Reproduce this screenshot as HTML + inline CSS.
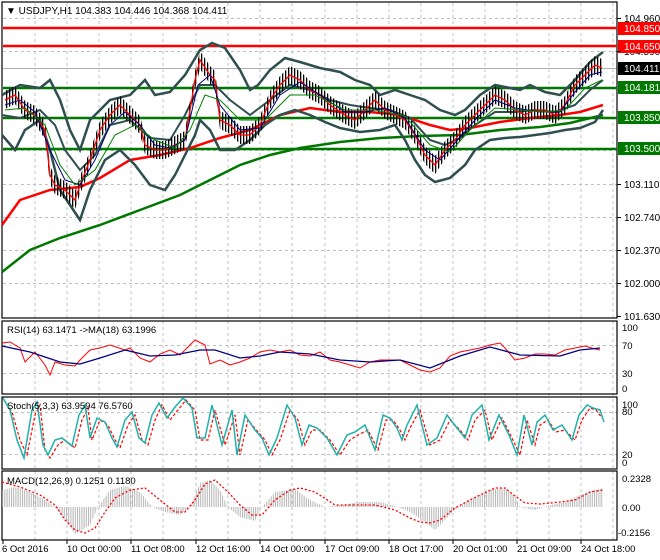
<!DOCTYPE html>
<html><head><meta charset="utf-8"><style>
html,body{margin:0;padding:0;background:#fff;}
svg{display:block;font-family:"Liberation Sans",sans-serif;font-size:10px;}
</style></head><body>
<svg width="660" height="560" viewBox="0 0 660 560" xmlns="http://www.w3.org/2000/svg">
<defs>
<pattern id="hist" width="2.2" height="10" patternUnits="userSpaceOnUse"><rect x="0" y="0" width="1" height="10" fill="#b4b4b4"/></pattern>
<pattern id="bars" width="3" height="10" patternUnits="userSpaceOnUse"><rect x="0" y="0" width="1.3" height="10" fill="#000"/></pattern>
</defs>
<rect width="660" height="560" fill="#fff"/>
<g stroke="#c0c0c0" stroke-dasharray="3 3" stroke-width="1">
<path d="M35 3V540M67 3V540M99 3V540M131 3V540M163 3V540M196 3V540M228 3V540M260 3V540M292 3V540M325 3V540M357 3V540M389 3V540M421 3V540M453 3V540M485 3V540M517 3V540M549 3V540M581 3V540M613 3V540"/>
<path d="M3 18.5H617M3 51.5H617M3 117.5H617M3 150.5H617M3 184.5H617M3 217.5H617M3 250.5H617M3 283.5H617"/>
<path d="M3 345.5H617M3 373.5H617M3 412.5H617M3 454.5H617"/>
</g>
<path d="M3 68.5H617" stroke="#b0b0b0"/>
<g fill="none" stroke="#000" stroke-width="1.2">
<rect x="2" y="2" width="615" height="316"/>
<rect x="2" y="321" width="615" height="73"/>
<rect x="2" y="397" width="615" height="72"/>
<rect x="2" y="471" width="615" height="69"/>
</g>
<g stroke-width="2.5">
<path d="M3 28H617M3 46H617" stroke="#ff0000"/>
<path d="M3 88H617M3 118H617M3 149H617" stroke="#007800"/>
</g>
<polyline fill="none" stroke="#007800" stroke-width="2.5" points="2,272 30,250 60,238 100,225 140,210 180,195 210,180 240,165 270,155 300,148 340,142 380,138 420,136 460,135 500,130 540,127 570,123 603,115"/>
<polyline fill="none" stroke="#ff0000" stroke-width="2.5" points="2,225 20,200 50,190 80,187 100,178 130,160 160,155 190,148 220,138 250,130 280,115 310,108 340,112 370,112 400,115 430,125 450,130 470,128 500,122 530,118 560,115 580,112 603,105"/>
<g fill="none" stroke="#2f4f4f" stroke-width="2.5">
<polyline points="2,95 20,85 40,88 50,80 60,100 70,130 80,150 90,120 110,100 130,95 145,80 155,95 170,92 185,75 200,50 212,43 225,48 240,70 250,90 258,85 270,70 285,58 300,62 320,68 340,72 355,80 370,85 380,95 395,90 410,95 425,100 440,110 455,115 465,110 480,95 495,85 510,88 520,90 530,85 545,92 560,95 575,80 590,62 603,52"/>
<polyline points="2,135 15,150 25,130 40,120 50,150 60,190 70,205 80,220 90,190 105,160 120,150 135,165 150,185 165,190 175,175 185,155 195,135 200,120 210,130 220,150 235,150 250,140 265,125 280,115 295,110 310,115 325,122 340,128 360,132 380,130 395,125 405,140 415,160 425,175 435,182 450,178 465,165 475,150 490,140 505,138 520,137 535,135 550,133 565,130 580,128 595,122 603,110"/>
<polyline stroke-width="2" points="2,115 20,118 40,110 55,125 65,150 80,170 95,155 110,125 130,120 150,138 170,140 185,115 200,85 215,85 230,100 250,115 270,100 290,85 310,90 330,100 350,105 370,108 390,110 410,118 430,140 445,145 460,138 475,125 495,112 515,112 535,110 555,112 575,105 590,90 603,80"/>
</g>
<polygon fill="url(#bars)" points="5,91 15,86 25,101 35,106 45,121 50,166 55,176 65,181 75,191 80,176 90,151 100,121 110,106 120,96 130,106 140,116 145,136 155,141 165,141 175,136 185,131 195,71 200,51 210,66 215,71 220,111 230,116 240,126 250,126 260,116 270,91 280,76 290,66 300,71 310,81 320,86 330,96 345,106 355,111 365,101 375,91 385,101 395,106 405,111 415,126 425,146 435,156 445,141 455,131 465,116 475,106 485,96 495,86 505,91 515,101 525,106 535,101 545,101 555,106 565,96 575,76 585,66 595,56 602,59 602,77 595,74 585,84 575,94 565,114 555,124 545,119 535,119 525,124 515,119 505,109 495,104 485,114 475,124 465,134 455,149 445,159 435,174 425,164 415,144 405,129 395,124 385,119 375,109 365,119 355,129 345,124 330,114 320,104 310,99 300,89 290,84 280,94 270,109 260,134 250,144 240,144 230,134 220,129 215,89 210,84 200,69 195,89 185,149 175,154 165,159 155,159 145,154 140,134 130,124 120,114 110,124 100,139 90,169 80,194 75,209 65,199 55,194 50,184 45,139 35,124 25,119 15,104 5,109"/>
<polyline fill="none" stroke="#ff0000" stroke-width="1.3" points="5,100 15,95 25,110 35,115 45,130 50,175 55,185 65,190 75,200 80,185 90,160 100,130 110,115 120,105 130,115 140,125 145,145 155,150 165,150 175,145 185,140 195,80 200,60 210,75 215,80 220,120 230,125 240,135 250,135 260,125 270,100 280,85 290,75 300,80 310,90 320,95 330,105 345,115 355,120 365,110 375,100 385,110 395,115 405,120 415,135 425,155 435,165 445,150 455,140 465,125 475,115 485,105 495,95 505,100 515,110 525,115 535,110 545,110 555,115 565,105 575,85 585,75 595,65 602,68"/>
<polyline fill="none" stroke="#000080" stroke-width="1" points="5,105 20,100 35,112 50,150 65,180 80,185 95,160 110,125 125,112 140,125 155,145 170,148 185,140 198,85 210,75 220,105 240,130 260,128 280,95 300,82 320,95 345,112 365,112 385,108 405,118 425,150 440,160 455,143 475,120 495,100 515,108 540,112 560,112 575,92 590,75 602,72"/>
<polyline fill="none" stroke="#008000" stroke-width="1" points="5,110 25,108 45,125 60,165 75,185 95,170 115,135 135,125 155,140 175,148 190,130 205,95 220,100 240,120 265,120 290,95 315,95 345,110 375,110 405,116 430,145 450,152 470,130 495,108 520,110 545,112 565,110 585,88 602,80"/>
<g fill="#000" font-size="10">
<text x="624" y="22">104.960</text>
<text x="624" y="55">104.590</text>
<text x="624" y="188">103.110</text>
<text x="624" y="221">102.740</text>
<text x="624" y="254">102.370</text>
<text x="624" y="287">102.000</text>
<text x="624" y="320">101.630</text>
</g>
<rect x="618" y="22" width="42" height="13" fill="#ff0000"/><text x="624" y="32" fill="#fff">104.850</text>
<rect x="618" y="40" width="42" height="13" fill="#ff0000"/><text x="624" y="50" fill="#fff">104.650</text>
<rect x="618" y="62" width="42" height="13" fill="#000"/><text x="624" y="72" fill="#fff">104.411</text>
<rect x="618" y="81" width="42" height="13" fill="#007800"/><text x="624" y="91" fill="#fff">104.181</text>
<rect x="618" y="111" width="42" height="13" fill="#007800"/><text x="624" y="121" fill="#fff">103.850</text>
<rect x="618" y="142" width="42" height="13" fill="#007800"/><text x="624" y="152" fill="#fff">103.500</text>
<g stroke="#000"><path d="M617 18.5h4M617 51.5h4M617 184.5h4M617 217.5h4M617 250.5h4M617 283.5h4M617 316.5h4"/></g>
<text x="6" y="14" fill="#000" font-size="10">▼ USDJPY,H1  104.383 104.446 104.368 104.411</text>
<polyline fill="none" stroke="#ff0000" stroke-width="1" points="2,343 10,342 20,348 25,362 35,352 45,365 50,375 55,362 65,365 75,366 80,360 90,350 100,348 110,345 125,350 130,348 140,358 150,362 160,354 170,350 180,355 190,345 195,340 205,345 210,364 220,360 230,365 240,362 250,358 260,352 270,350 280,352 290,350 300,355 310,356 320,352 330,360 340,362 350,365 360,368 370,362 380,360 400,360 410,365 420,370 430,372 440,368 450,356 460,352 470,350 480,348 490,345 500,343 505,348 515,360 525,358 535,354 545,354 555,355 565,350 575,348 585,346 595,349 600,350"/>
<polyline fill="none" stroke="#000080" stroke-width="1.3" points="2,346 30,352 60,362 80,364 100,358 125,350 150,356 175,355 200,350 215,350 240,358 260,356 280,352 310,354 340,360 370,362 400,360 430,368 460,356 490,347 520,355 560,356 580,350 600,348"/>
<text x="7" y="333" font-size="9.5">RSI(14) 63.1471  -&gt;MA(18) 63.1996</text>
<g font-size="9.5"><text x="622" y="331">100</text><text x="622" y="349">70</text><text x="622" y="377">30</text><text x="622" y="392">0</text></g>
<polyline fill="none" stroke="#ff0000" stroke-width="1.2" stroke-dasharray="3 2" points="4,400 12,412 20,440 27,455 35,415 40,405 45,450 50,458 58,445 65,440 75,448 82,420 88,408 92,440 100,420 108,425 115,440 120,448 128,425 135,415 142,440 148,445 155,420 162,405 170,420 178,410 186,400 195,410 200,440 208,440 215,410 225,445 235,415 240,455 248,420 258,432 265,440 272,455 280,440 290,410 298,420 305,445 312,430 320,430 330,440 340,455 350,440 358,435 368,430 378,450 386,420 393,420 400,430 405,440 410,428 420,410 430,445 440,440 450,420 460,430 468,440 475,420 485,410 492,440 502,418 512,438 520,455 527,420 535,445 540,425 548,420 556,432 565,430 575,440 582,420 590,408 596,410 602,418"/>
<polyline fill="none" stroke="#20b2aa" stroke-width="1.5" points="3,398 10,410 17,440 24,458 32,410 37,402 43,445 48,455 55,440 62,438 72,446 79,415 85,405 90,438 97,418 105,422 112,438 117,447 125,420 132,412 139,438 145,443 152,415 159,403 167,418 175,407 183,398 192,408 197,438 205,438 212,405 222,445 232,410 237,455 245,415 255,430 262,438 269,455 277,438 287,405 295,418 302,445 309,425 317,428 327,438 337,455 347,435 355,432 365,425 375,450 383,415 390,418 397,428 402,440 407,425 417,405 427,445 437,438 447,415 457,428 465,438 472,415 482,405 489,440 499,415 509,435 517,455 524,415 532,445 537,422 545,415 553,430 562,425 572,440 579,415 587,405 593,408 600,410 604,422"/>
<text x="7" y="409" font-size="9.5">Stoch(5,3,3) 63.9594 76.5760</text>
<g font-size="9.5"><text x="622" y="408">100</text><text x="622" y="415">80</text><text x="622" y="458">20</text><text x="622" y="466">0</text></g>
<polygon fill="url(#hist)" points="2,507 2,490 15,487 30,492 45,500 55,507 62,515 75,534 90,525 98,507 110,490 125,486 140,492 152,507 165,512 180,515 190,507 200,483 210,480 220,490 228,507 240,517 255,521 262,507 275,492 295,489 310,500 325,507 340,505 360,502 380,502 395,506 410,512 425,522 435,530 445,520 458,507 470,500 490,490 505,488 515,497 520,507 535,510 550,505 565,502 580,495 595,490 603,488 603,507"/>
<polyline fill="none" stroke="#ff0000" stroke-width="1.3" stroke-dasharray="2 2" points="2,482 20,487 40,495 55,505 65,520 75,530 85,533 95,528 105,512 115,498 130,490 145,488 160,500 175,512 185,512 195,500 205,484 215,480 228,492 240,505 252,515 262,515 275,500 290,490 300,488 315,492 335,505 355,505 375,505 395,510 410,518 420,522 430,523 440,520 455,508 470,500 480,495 495,488 505,488 515,496 525,503 540,504 560,502 575,500 590,492 603,490"/>
<text x="7" y="484" font-size="9.5">MACD(12,26,9) 0.1251 0.1180</text>
<g font-size="9.5"><text x="622" y="482">0.2328</text><text x="622" y="511">0.00</text><text x="618" y="536">-0.2156</text></g>
<g stroke="#000"><path d="M3 540v4M67 540v4M131 540v4M196 540v4M260 540v4M325 540v4M389 540v4M453 540v4M517 540v4M581 540v4"/></g>
<g font-size="9.5">
<text x="2" y="552">6 Oct 2016</text>
<text x="67" y="552">10 Oct 00:00</text>
<text x="131" y="552">11 Oct 08:00</text>
<text x="196" y="552">12 Oct 16:00</text>
<text x="260" y="552">14 Oct 00:00</text>
<text x="325" y="552">17 Oct 09:00</text>
<text x="389" y="552">18 Oct 17:00</text>
<text x="453" y="552">20 Oct 01:00</text>
<text x="517" y="552">21 Oct 09:00</text>
<text x="581" y="552">24 Oct 18:00</text>
</g>
</svg>
</body></html>
